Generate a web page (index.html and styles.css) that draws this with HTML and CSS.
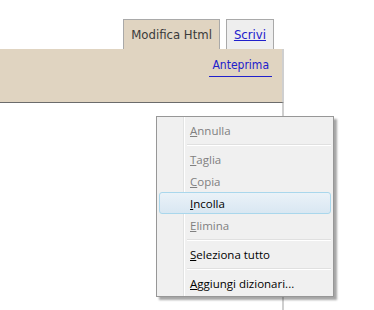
FILE: index.html
```html
<html><head>
    <meta charset="UTF-8">
    <meta name="viewport" content="width=device-width, initial-scale=1.0">
    <title>Editor post</title>
    <link rel="stylesheet" href="styles.css">
    </head>
    <body>
        <div class="editor">
            <div class="tabs">
                <span class="tab tab-active">Modifica Html</span>
                <span class="tab"><a href="#">Scrivi</a></span>
            </div>
            <div class="toolbar">
                <a class="preview" href="#">Anteprima</a>
            </div>
            <div class="textarea"></div>
        </div>

        <div class="context-menu">
            <div class="item disabled"><u>A</u>nnulla</div>
            <div class="sep"></div>
            <div class="item disabled"><u>T</u>aglia</div>
            <div class="item disabled"><u>C</u>opia</div>
            <div class="item hover"><u>I</u>ncolla</div>
            <div class="item disabled"><u>E</u>limina</div>
            <div class="sep"></div>
            <div class="item"><u>S</u>eleziona tutto</div>
            <div class="sep"></div>
            <div class="item"><u>A</u>ggiungi dizionari...</div>
        </div>
    </body>
    </html>
```

FILE: styles.css
```css
:root {
    /* Editor colours */
    --color-bar: #e0d4c1;
    --color-tab-border: #a9a9a9;
    --color-link: #2020cc;

    /* Menu colours */
    --color-menu-bg: #f0f0f0;
    --color-menu-border: #979797;
    --color-disabled: #808080;
}

body {
    margin: 0;
    padding: 0;
    background-color: #fff;
    font-family: 'DejaVu Sans Condensed', 'DejaVu Sans', sans-serif;
    height: 310px;
    overflow: hidden;
}

.editor {
    width: 284px;
    height: 310px;
    display: flex;
    flex-direction: column;
}

.tabs {
    display: flex;
    justify-content: flex-end;
    gap: 6px;
    padding: 19px 10px 0 0;
    height: 30px;
}

.tab {
    border: 1px solid var(--color-tab-border);
    border-bottom: none;
    background-color: #eeeeee;
    padding: 0 7px;
    font-size: 13px;
    line-height: 29px;
    color: #3a3a3a;
}

.tab-active {
    background-color: var(--color-bar);
}

.tab a {
    color: var(--color-link);
}

.toolbar {
    background-color: var(--color-bar);
    height: 53px;
    border-bottom: 1px solid #6b6b6b;
    border-right: 2px solid #cfcfcf;
    display: flex;
    justify-content: flex-end;
    align-items: flex-start;
    padding-right: 10px;
}

.preview {
    margin-top: 8px;
    padding: 0 3px 3px;
    font-size: 12px;
    line-height: 16px;
    color: var(--color-link);
    text-decoration: none;
    border-bottom: 1px solid var(--color-link);
}

.textarea {
    flex-grow: 1;
    border-right: 2px solid #cfcfcf;
}

/* context menu laid over the editor */
.context-menu {
    position: absolute;
    left: 156px;
    top: 116px;
    width: 172px;
    padding: 2px;
    background-color: var(--color-menu-bg);
    border: 1px solid var(--color-menu-border);
    box-shadow: 3px 3px 2px rgba(0, 0, 0, 0.35);
    font-family: 'Open Sans', 'Noto Sans', sans-serif;
    font-size: 11.5px;
    background-image: linear-gradient(to right, transparent 26px, #e2e3e3 26px, #e2e3e3 27px, #fff 27px, #fff 28px, transparent 28px);
}

.item {
    height: 22px;
    line-height: 21px;
    padding-left: 30px;
    color: #000;
    border: 1px solid transparent;
    box-sizing: border-box;
    border-radius: 3px;
}

.item.disabled {
    color: var(--color-disabled);
}

.item.hover {
    border-color: #a9d7ec;
    background: linear-gradient(#eaf2f8, #d9e7f2);
}

.sep {
    height: 7px;
    margin-left: 28px;
    background-image: linear-gradient(transparent 3px, #e0e0e0 3px, #e0e0e0 4px, #fff 4px, #fff 5px, transparent 5px);
}
```
